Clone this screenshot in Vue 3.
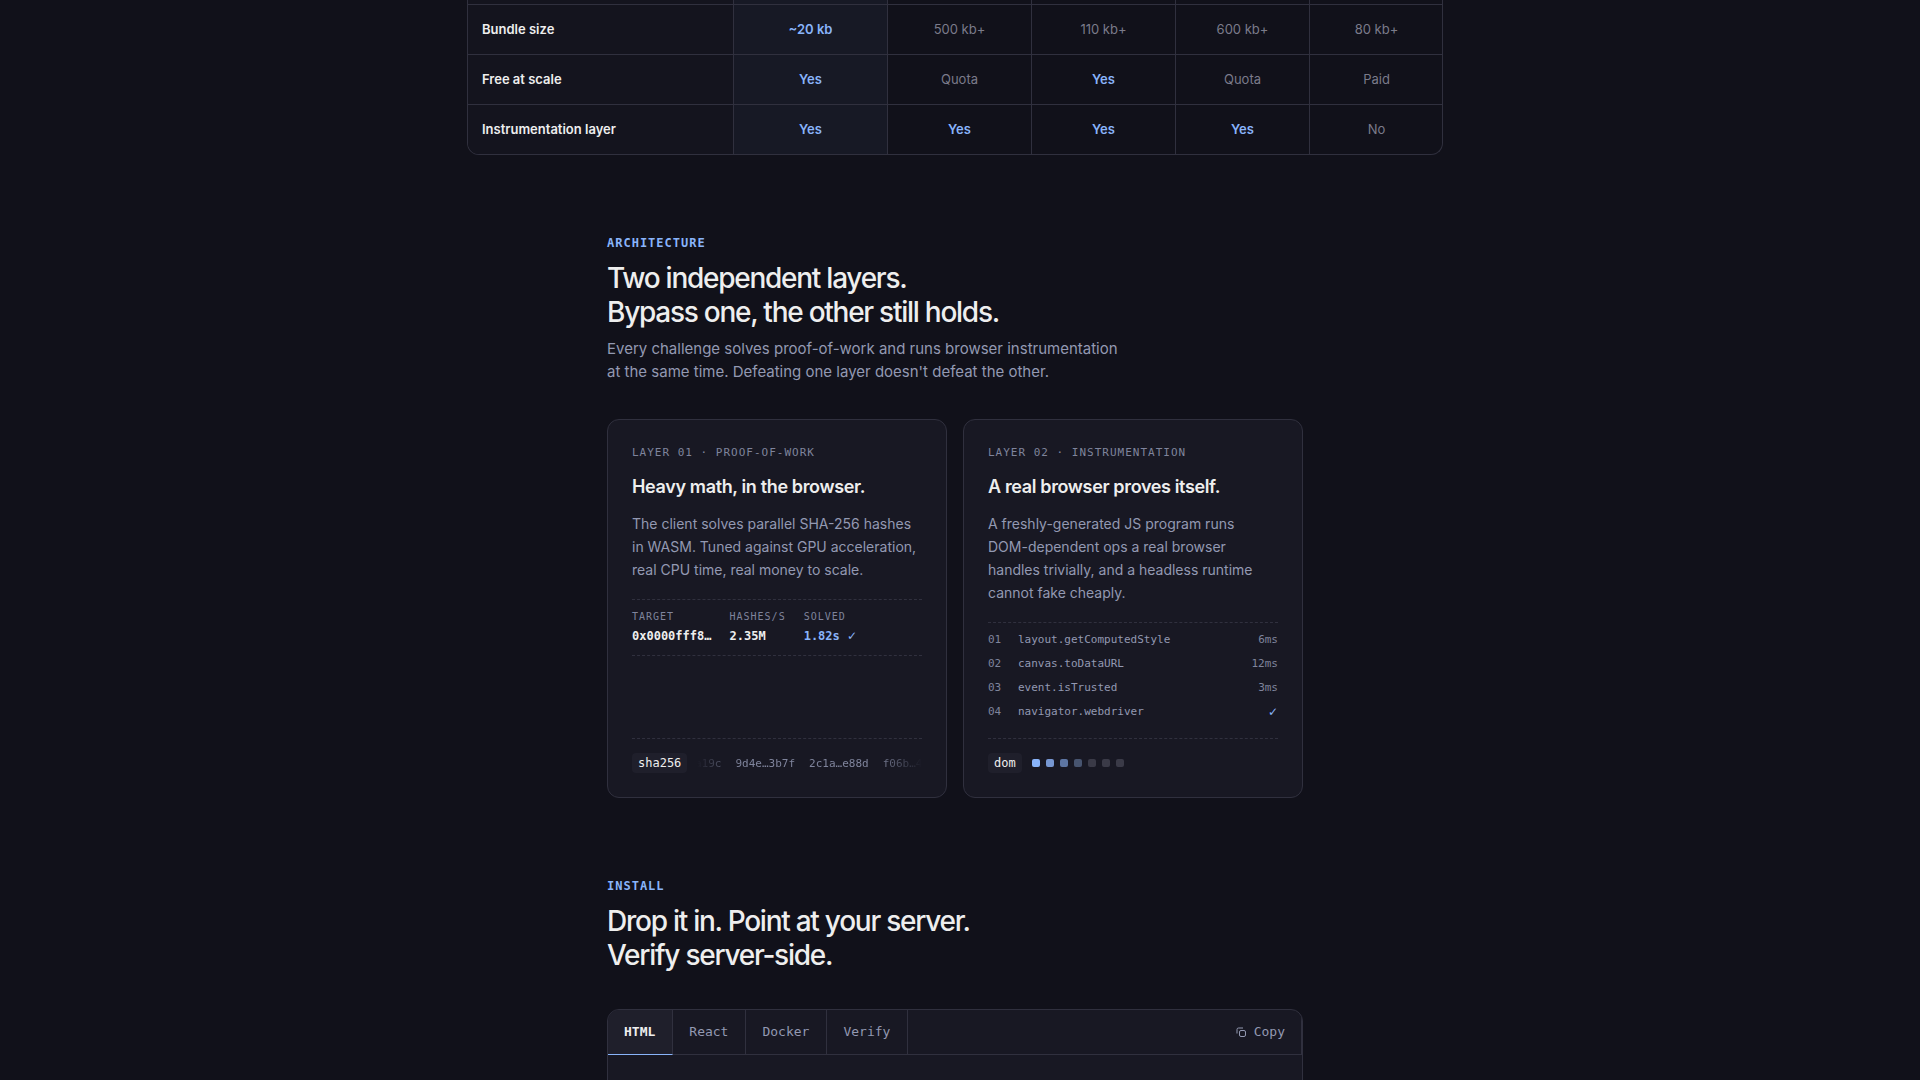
<script setup>
import { ref } from 'vue'

const rows = [
  { label: 'Bundle size', cells: ['~20 kb', '500 kb+', '110 kb+', '600 kb+', '80 kb+'] },
  { label: 'Free at scale', cells: ['Yes', 'Quota', 'Yes', 'Quota', 'Paid'] },
  { label: 'Instrumentation layer', cells: ['Yes', 'Yes', 'Yes', 'Yes', 'No'] },
]
const stats = [
  { name: 'TARGET', value: '0x0000fff8…' },
  { name: 'HASHES/S', value: '2.35M' },
  { name: 'SOLVED', value: '1.82s', done: true },
]
const hashes = ['…a19c', '9d4e…3b7f', '2c1a…e88d', 'f06b…41d2']
const ops = [
  { id: '01', name: 'layout.getComputedStyle', time: '6ms' },
  { id: '02', name: 'canvas.toDataURL', time: '12ms' },
  { id: '03', name: 'event.isTrusted', time: '3ms' },
  { id: '04', name: 'navigator.webdriver', done: true },
]
const tabs = ['HTML', 'React', 'Docker', 'Verify']
const active = ref('HTML')
</script>

<template>
  <main class="page">
    <div class="compare">
      <table>
        <colgroup>
          <col class="c-label" /><col class="c-own" /><col class="c-mid" /><col class="c-mid" /><col class="c-small" /><col class="c-small" />
        </colgroup>
        <tbody>
          <tr class="stub" aria-hidden="true"><td v-for="n in 6" :key="n"></td></tr>
          <tr v-for="r in rows" :key="r.label">
            <th scope="row">{{ r.label }}</th>
            <td v-for="(c, i) in r.cells" :key="i" :class="{ yes: c === 'Yes' || i === 0 }">{{ c }}</td>
          </tr>
        </tbody>
      </table>
    </div>

    <section class="section">
      <p class="eyebrow">ARCHITECTURE</p>
      <h2>Two independent layers.<br />Bypass one, the other still holds.</h2>
      <p class="lead">Every challenge solves proof-of-work and runs browser instrumentation<br />at the same time. Defeating one layer doesn't defeat the other.</p>

      <div class="cards">
        <article class="card">
          <p class="layer">LAYER 01 · PROOF-OF-WORK</p>
          <h3>Heavy math, in the browser.</h3>
          <p class="body">The client solves parallel SHA-256 hashes in WASM. Tuned against GPU acceleration, real CPU time, real money to scale.</p>
          <dl class="stats">
            <div v-for="s in stats" :key="s.name">
              <dt>{{ s.name }}</dt>
              <dd :class="{ good: s.done }">{{ s.value }}<template v-if="s.done">&nbsp;<span class="check">✓</span></template></dd>
            </div>
          </dl>
          <footer>
            <code class="chip">sha256</code>
            <div class="ticker"><span v-for="h in hashes" :key="h">{{ h }}</span></div>
          </footer>
        </article>

        <article class="card">
          <p class="layer">LAYER 02 · INSTRUMENTATION</p>
          <h3>A real browser proves itself.</h3>
          <p class="body">A freshly-generated JS program runs DOM-dependent ops a real browser handles trivially, and a headless runtime cannot fake cheaply.</p>
          <ol class="ops">
            <li v-for="o in ops" :key="o.id">
              <span class="num">{{ o.id }}</span>
              <span class="op">{{ o.name }}</span>
              <span v-if="o.done" class="time good check">✓</span>
              <span v-else class="time">{{ o.time }}</span>
            </li>
          </ol>
          <footer>
            <code class="chip">dom</code>
            <div class="dots"><i v-for="n in 7" :key="n" :class="'d' + n"></i></div>
          </footer>
        </article>
      </div>
    </section>

    <section class="section install">
      <p class="eyebrow">INSTALL</p>
      <h2>Drop it in. Point at your server.<br />Verify server-side.</h2>
      <div class="panel">
        <div class="bar">
          <button v-for="t in tabs" :key="t" type="button" class="tab" :class="{ on: t === active }" @click="active = t">{{ t }}</button>
          <button type="button" class="copy">
            <svg width="11" height="11" viewBox="0 0 11 11" fill="none" stroke="currentColor" aria-hidden="true">
              <rect x="3.5" y="3.5" width="6" height="6" rx="1.5" />
              <path d="M1 6.5V2.5A1.5 1.5 0 0 1 2.500 1H7" />
            </svg>
            Copy
          </button>
        </div>
      </div>
    </section>
  </main>
</template>

<style>
body {
  background: #11111a;
}
</style>

<style scoped>
.page {
  --line: #30303e;
  --blue: #89b4fa;
  --mono: "DejaVu Sans Mono", "Liberation Mono", monospace;
  box-sizing: border-box;
  height: 100vh;
  overflow: hidden;
  padding-right: 10px;
  background: #11111a;
  color: #eeeeee;
  font-family: Inter, "Liberation Sans", sans-serif;
}
p, h2, h3, dl, dd, ol {
  margin: 0;
  padding: 0;
}
.compare {
  box-sizing: border-box;
  max-width: 976px;
  margin: 0 auto;
  border: 1px solid var(--line);
  border-top: 0;
  border-radius: 0 0 12px 12px;
  overflow: hidden;
}
table {
  width: 100%;
  table-layout: fixed;
  border-collapse: separate;
  border-spacing: 0;
  font-size: 13px;
  line-height: 20px;
}
.c-label { width: 265px; }
.c-own { width: 154px; }
.c-mid { width: 144px; }
.c-small { width: 134px; }
th, td {
  box-sizing: border-box;
  height: 50px;
  padding: 0 14px 2px;
  border-top: 1px solid var(--line);
  text-align: center;
  font-weight: 400;
  color: #7b7b8a;
}
td {
  border-left: 1px solid var(--line);
}
th {
  text-align: left;
  font-weight: 600;
  color: #eeeeee;
  background: #14141e;
}
td:nth-child(2) {
  background: #171925;
}
td.yes {
  font-weight: 600;
  color: var(--blue);
}
.stub td {
  height: 4px;
  padding: 0;
  border-top: 0;
}
.stub td:first-child {
  border-left: 0;
  background: #14141e;
}
.stub td:nth-child(2) {
  background: #171925;
}
.section {
  max-width: 696px;
  margin: 80px auto 0;
}
.eyebrow {
  font: 700 12px/16px var(--mono);
  letter-spacing: 1px;
  color: var(--blue);
}
h2 {
  margin-top: 10px;
  font-size: 28px;
  line-height: 34px;
  font-weight: 500;
  letter-spacing: -0.045em;
}
.lead {
  margin-top: 8px;
  font-size: 15px;
  line-height: 23px;
  color: #9399b2;
}
.cards {
  display: grid;
  grid-template-columns: repeat(2, minmax(0, 1fr));
  gap: 16px;
  margin-top: 36px;
}
.card {
  display: flex;
  flex-direction: column;
  padding: 24px;
  border: 1px solid var(--line);
  border-radius: 12px;
  background: #181823;
}
.layer {
  font: 11px/18px var(--mono);
  letter-spacing: 1px;
  color: #7f849c;
}
h3 {
  margin-top: 13px;
  font-size: 18px;
  line-height: 24px;
  font-weight: 600;
  letter-spacing: -0.02em;
}
.body {
  margin-top: 13px;
  font-size: 14px;
  line-height: 23px;
  color: #9399b2;
}
.stats {
  display: flex;
  gap: 18px;
  margin-top: 18px;
  padding: 10px 0;
  border: dashed var(--line);
  border-width: 1px 0;
}
dt {
  font: 10px/14px var(--mono);
  letter-spacing: 1px;
  color: #7f849c;
}
dd {
  margin-top: 3px;
  font: 700 12px/18px var(--mono);
}
.good {
  color: var(--blue);
}
.check {
  font-family: "DejaVu Sans", sans-serif;
  font-size: 12px;
  font-weight: 400;
  line-height: 1;
}
.ops {
  margin-top: 18px;
  padding: 5px 0 14px;
  border-top: 1px dashed var(--line);
  list-style: none;
  font: 11px/24px var(--mono);
  color: #9399b2;
}
.ops li {
  display: flex;
  align-items: center;
  height: 24px;
}
.num {
  width: 30px;
  color: #7f849c;
}
.time {
  margin-left: auto;
}
.time:not(.good) {
  color: #7f849c;
}
footer {
  display: flex;
  align-items: center;
  gap: 10px;
  margin-top: auto;
  padding-top: 14px;
  border-top: 1px dashed var(--line);
}
.chip {
  padding: 0 6px;
  border-radius: 4px;
  background: #1f1f2b;
  font: 12px/20px var(--mono);
}
.ticker {
  flex: 1;
  display: flex;
  gap: 14px;
  min-width: 0;
  padding-top: 2px;
  overflow: hidden;
  white-space: nowrap;
  font: 11px/18px var(--mono);
  color: #7f849c;
  -webkit-mask-image: linear-gradient(90deg, transparent, #000 20%, #000 80%, transparent);
  mask-image: linear-gradient(90deg, transparent, #000 20%, #000 80%, transparent);
}
.ticker span:first-child {
  margin-left: -9px;
}
.dots {
  display: flex;
  gap: 6px;
}
.dots i {
  width: 8px;
  height: 8px;
  border-radius: 2px;
  background: #3a3a47;
}
.dots .d1 { background: #89b4fa; }
.dots .d2 { background: #7797d2; }
.dots .d3 { background: #5d75a2; }
.dots .d4 { background: #47546f; }
.install .panel {
  margin-top: 37px;
  height: 240px;
  border: 1px solid var(--line);
  border-radius: 12px;
  background: #181823;
  overflow: hidden;
}
.bar {
  display: flex;
  border-bottom: 1px solid var(--line);
}
button {
  padding: 0 17px 0 16px;
  border: 0;
  background: none;
  color: #9399b2;
  font: 13px/44px var(--mono);
  cursor: pointer;
}
.tab {
  border-right: 1px solid var(--line);
}
.tab.on {
  margin-bottom: -1px;
  border-bottom: 1px solid var(--blue);
  background: #1f1f2b;
  color: #eeeeee;
  font-weight: 700;
}
.copy {
  display: flex;
  align-items: center;
  gap: 7px;
  margin-left: auto;
  padding-right: 16px;
  border-right: 1px solid var(--line);
}
</style>
